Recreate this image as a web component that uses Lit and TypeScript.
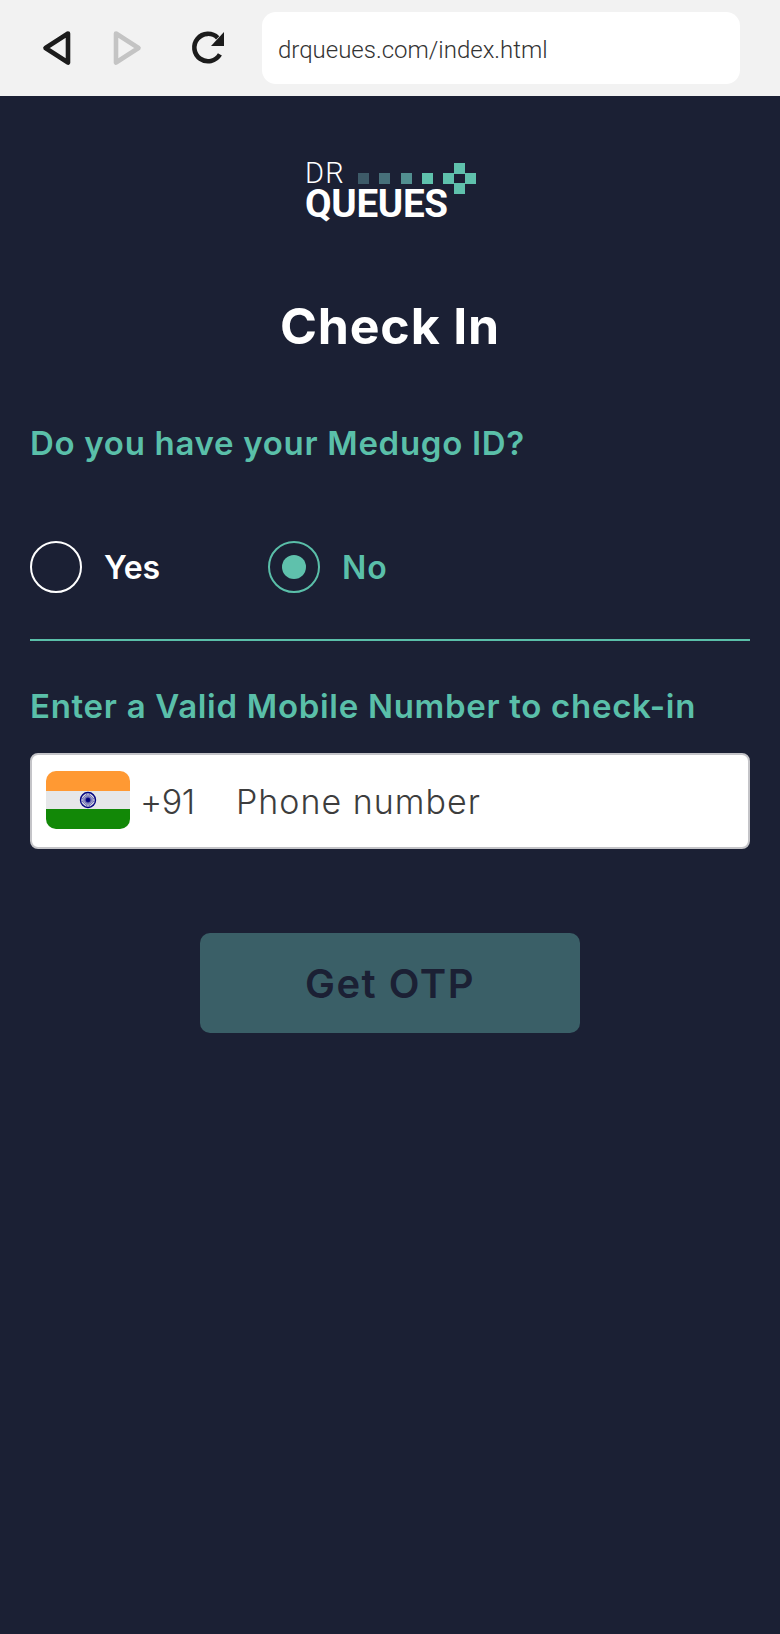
import { LitElement, html, css, svg } from "lit";
import { customElement } from "lit/decorators.js";

const spokes = Array.from({ length: 24 }, (_, i) => {
  const a = (i * Math.PI) / 12;
  return svg`<line x1="0" y1="0" x2=${6.5 * Math.cos(a)} y2=${6.5 * Math.sin(a)}></line>`;
});

@customElement("app-root")
export class AppRoot extends LitElement {
  static styles = css`
    :host { display: block; width: 780px; height: 1634px; background: #1b2034; font-family: "Inter", "Liberation Sans", sans-serif; overflow: hidden; }
    .bar { height: 96px; box-sizing: border-box; background: #f2f2f2; display: flex; align-items: center; position: relative; padding: 0 40px 0 262px; }
    .nav { position: absolute; top: 0; left: 0; }
    .url { flex: 1; height: 72px; background: #fff; border-radius: 14px; display: flex; align-items: center; padding: 3px 0 0 16px; box-sizing: border-box; font: 300 24px "Roboto", sans-serif; color: #333; }
    main { padding: 64px 30px 0; display: flex; flex-direction: column; }
    .logo { align-self: center; width: 172px; height: 60px; position: relative; }
    .dr { position: absolute; left: 1px; top: 0; font: 300 29px/26px "Roboto", sans-serif; color: #fff; letter-spacing: 1.2px; }
    .queues { position: absolute; left: 1px; top: 28px; font: 700 38.6px/32px "Roboto", sans-serif; color: #fff; letter-spacing: -0.3px; }
    .squares { position: absolute; left: 0; top: 0; }
    h1 { margin: 71px 0 0; text-align: center; font-size: 50px; line-height: 70px; font-weight: 700; color: #fff; letter-spacing: 0.85px; }
    .label { font-size: 33px; line-height: 44px; font-weight: 600; color: #5abfa9; letter-spacing: 0.7px; white-space: nowrap; }
    .q1 { margin-top: 60px; }
    .radios { display: flex; margin-top: 76px; height: 52px; }
    .radio { display: flex; align-items: center; gap: 22px; font-size: 32px; font-weight: 600; color: #fff; }
    .radio.yes { width: 238px; }
    .radio.no { color: #5abfa9; letter-spacing: 1px; }
    .dot { width: 52px; height: 52px; box-sizing: border-box; border-radius: 50%; border: 2px solid #fff; display: flex; align-items: center; justify-content: center; }
    .no .dot { border-color: #5abfa9; }
    .no .dot i { width: 24px; height: 24px; border-radius: 50%; background: #5fc1ac; }
    hr { margin: 46px 0 0; border: 0; height: 2px; background: #5abfa9; }
    .q2 { margin-top: 43px; }
    .input { margin-top: 25px; height: 96px; box-sizing: border-box; background: #fff; border: 2px solid #c4c4c8; border-radius: 8px; display: flex; align-items: center; padding-left: 14px; color: #3d3d3d; font-size: 34px; font-weight: 300; }
    .flag { display: block; margin-top: -2px; }
    .code { margin-left: 10px; width: 96px; letter-spacing: -0.4px; }
    .phone { letter-spacing: 1px; }
    .btn { align-self: center; margin-top: 84px; width: 380px; height: 100px; border-radius: 10px; background: #3a5f67; display: flex; align-items: center; justify-content: center; color: #1b2034; font-size: 40px; font-weight: 600; letter-spacing: 1.5px; }
  `;

  render() {
    return html`
      <div class="bar">
        <svg class="nav" width="250" height="96" viewBox="0 0 250 96" fill="none" stroke-linejoin="round" stroke-linecap="round">
          <path d="M68 33.5 L45.5 48 L68 62.5 Z" stroke="#1c1c1c" stroke-width="4.6"></path>
          <path d="M116 33.5 L138.5 48 L116 62.5 Z" stroke="#c4c4c4" stroke-width="4.6"></path>
          <path d="M217.7 37.8 A13.7 13.7 0 1 0 219.9 54.4" stroke="#1c1c1c" stroke-width="4.6" stroke-linecap="butt"></path>
          <path d="M224 32 V46 H211 Z" fill="#1c1c1c"></path>
        </svg>
        <div class="url">drqueues.com/index.html</div>
      </div>
      <main>
        <div class="logo">
          <span class="dr">DR</span>
          <span class="queues">QUEUES</span>
          <svg class="squares" width="172" height="60" viewBox="0 0 172 60">
            <rect x="54" y="13" width="11" height="11" fill="#3d5a68"></rect>
            <rect x="75" y="13" width="11" height="11" fill="#47707a"></rect>
            <rect x="97" y="13" width="11" height="11" fill="#528f90"></rect>
            <rect x="118" y="13" width="11" height="11" fill="#5fc1ac"></rect>
            <rect x="139" y="13" width="11" height="11" fill="#5fc1ac"></rect>
            <rect x="150" y="3" width="11" height="11" fill="#5fc1ac"></rect>
            <rect x="161" y="13" width="11" height="11" fill="#5fc1ac"></rect>
            <rect x="150" y="23" width="11" height="11" fill="#5fc1ac"></rect>
          </svg>
        </div>
        <h1>Check In</h1>
        <div class="label q1">Do you have your Medugo ID?</div>
        <div class="radios">
          <div class="radio yes"><span class="dot"></span>Yes</div>
          <div class="radio no"><span class="dot"><i></i></span>No</div>
        </div>
        <hr />
        <div class="label q2">Enter a Valid Mobile Number to check-in</div>
        <div class="input">
          <svg class="flag" width="84" height="58" viewBox="0 0 84 58">
            <defs><clipPath id="c"><rect width="84" height="58" rx="10"></rect></clipPath></defs>
            <g clip-path="url(#c)">
              <rect width="84" height="20" fill="#ff9933"></rect>
              <rect y="20" width="84" height="19" fill="#e6e7e8"></rect>
              <rect y="38" width="84" height="20" fill="#128807"></rect>
            </g>
            <g transform="translate(42 29)" stroke="#000080" stroke-width="0.5" fill="none">
              <circle r="7.5" stroke-width="1.4"></circle>
              ${spokes}
              <circle r="2" fill="#000080"></circle>
            </g>
          </svg>
          <span class="code">+91</span>
          <span class="phone">Phone number</span>
        </div>
        <div class="btn">Get OTP</div>
      </main>
    `;
  }
}
